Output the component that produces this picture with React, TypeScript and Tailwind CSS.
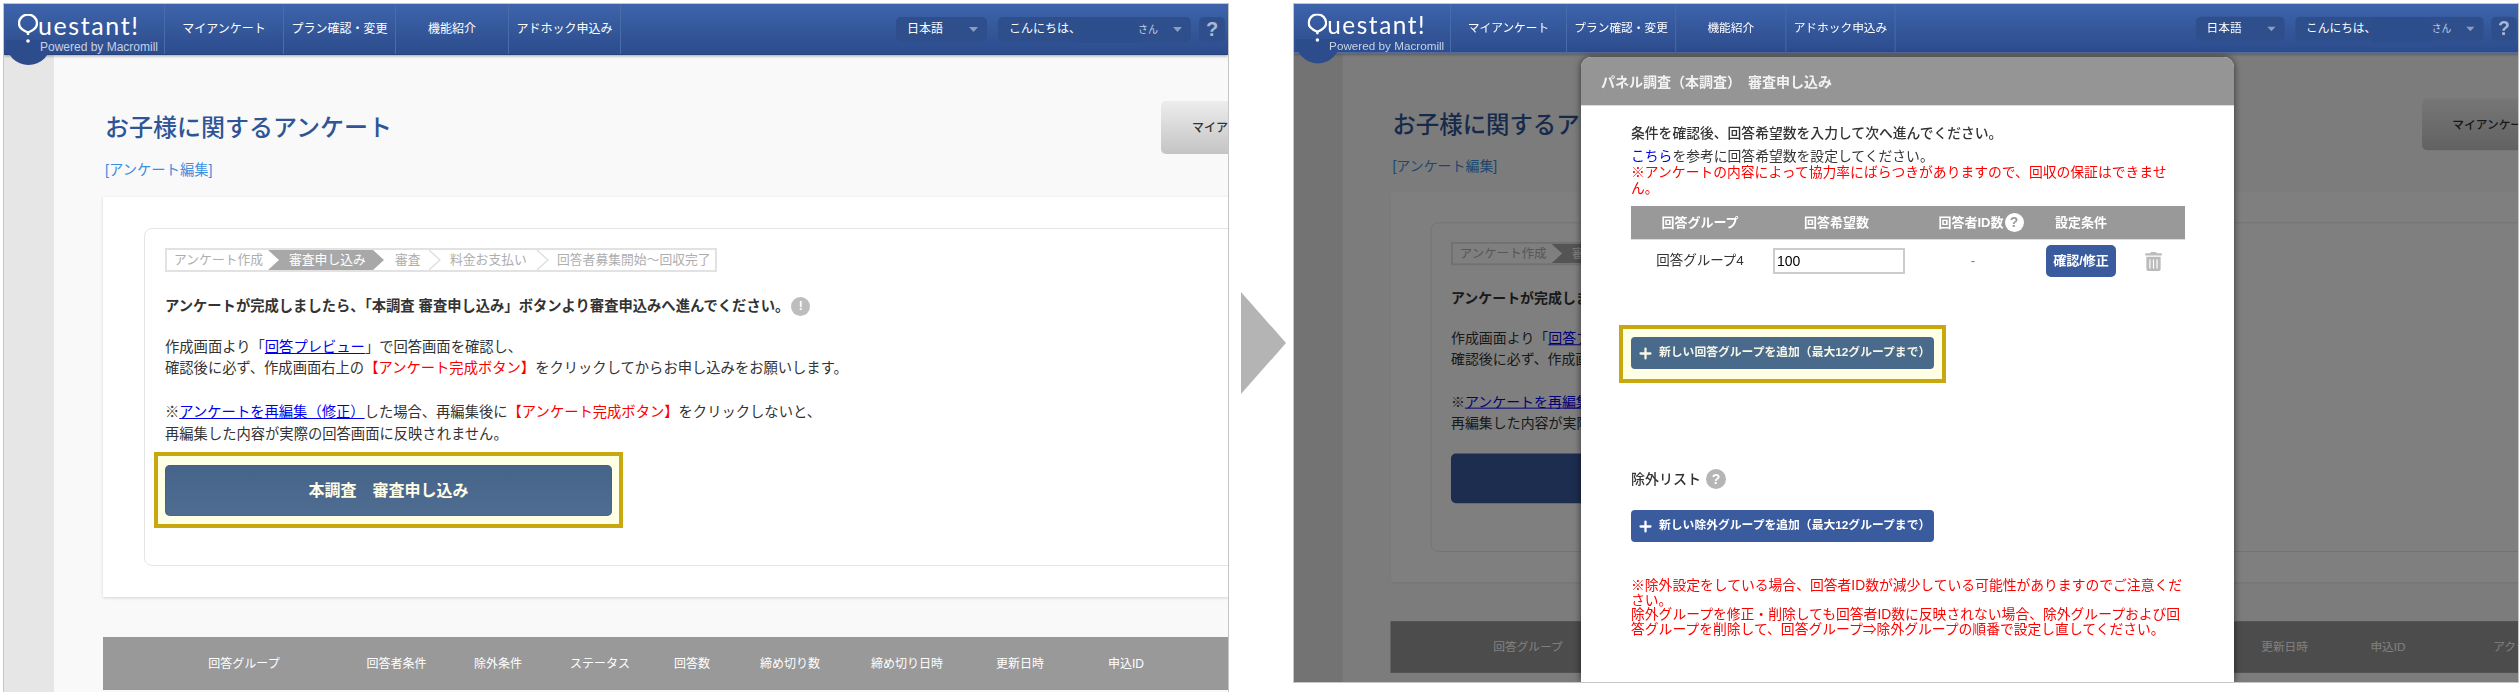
import React from 'react';
import { Plus } from 'lucide-react';
import { FaTrashAlt } from 'react-icons/fa';

const listColumns = ['回答グループ', '回答者条件', '除外条件', 'ステータス', '回答数', '締め切り数', '締め切り日時', '更新日時', '申込ID', 'アクション'];

const Caret: React.FC = () => (
  <svg width="9" height="5" viewBox="0 0 9 5" className="flex-none">
    <path d="M0 0h9L4.5 5z" fill="#8b9dc0" />
  </svg>
);

const StepChevron: React.FC = () => (
  <svg width="13" height="20" viewBox="0 0 13 20" className="flex-none">
    <path d="M1 0l11 10L1 20" fill="none" stroke="#dcdcdc" strokeWidth="1.2" />
  </svg>
);

const Header: React.FC = () => (
  <header className="relative z-10 flex h-[51px] items-stretch border-b border-[#264379] bg-linear-to-b from-[#3e64ab] to-[#2c4c8c] text-white shadow-[0_1px_3px_rgba(0,0,0,0.35)]">
    <div className="relative w-[160px] flex-none pl-[14px] pt-[7px]">
      <div className="absolute left-[2px] top-[36px] h-[25px] w-[45px] rounded-b-[24px] bg-[#2c4c8c]" />
      <div className="relative flex items-start">
        <svg width="20" height="31" viewBox="0 0 20 31" className="mt-[3px] flex-none">
          <path d="M10 18.5C5 16.5 1 14 1 9.500a9 9 0 0 1 18 0c0 4.500-4 7-9 9" fill="none" stroke="white" strokeWidth="2.400" />
          <path d="M10 18v3" stroke="white" strokeWidth="2.400" />
          <circle cx="10" cy="27" r="1.800" fill="white" />
        </svg>
        <span className="font-['Lato',sans-serif] text-[25px] leading-[28px] tracking-[1.6px]">uestant!</span>
      </div>
      <div className="relative -mt-[5px] ml-[22px] whitespace-nowrap font-['Liberation_Sans',sans-serif] text-[12px] leading-[14px] text-[#c6d1e6]">Powered by Macromill</div>
    </div>
    <nav className="flex border-l border-[#4a6cab] text-[12px]">
      <a className="flex w-[119px] items-center justify-center border-r border-[#4a6cab]">マイアンケート</a>
      <a className="flex w-[112px] items-center justify-center border-r border-[#4a6cab]">プラン確認・変更</a>
      <a className="flex w-[113px] items-center justify-center border-r border-[#4a6cab]">機能紹介</a>
      <a className="flex w-[112px] items-center justify-center border-r border-[#4a6cab]">アドホック申込み</a>
    </nav>
    <div className="ml-auto flex items-center gap-[8px] pr-[3px] text-[12px]">
      <div className="mr-[3px] flex h-[25px] w-[91px] items-center justify-between rounded-[5px] bg-[#2f4f8c] pl-[11px] pr-[9px]">
        <span>日本語</span>
        <Caret />
      </div>
      <div className="flex h-[25px] w-[193px] items-center rounded-[5px] bg-[#2f4f8c] pl-[11px] pr-[9px]">
        <span>こんにちは、</span>
        <span className="-ml-[3px] mt-[3px] h-[24px] w-[59px] flex-none bg-[#2c4e8c]" />
        <span className="ml-[1px] text-[10px] text-[#c6d1e6]">さん</span>
        <span className="ml-auto"><Caret /></span>
      </div>
      <div className="flex h-[25px] w-[26px] items-center justify-center rounded-[5px] bg-[#2f4f8c] font-['Liberation_Sans',sans-serif] text-[20px] font-bold text-[#aab8d3]">?</div>
    </div>
  </header>
);

const Steps: React.FC = () => (
  <div className="flex h-[24px] w-[552px] items-center whitespace-nowrap border-2 border-[#e2e2e2] text-[12.8px] text-[#aeaeae]">
    <span className="w-[101px] flex-none pl-[7px]">アンケート作成</span>
    <span className="flex h-full w-[116px] flex-none items-center bg-[#a8a8a8] pl-[21px] text-white [clip-path:polygon(0_0,calc(100%-11px)_0,100%_50%,calc(100%-11px)_100%,0_100%,11px_50%)]">審査申し込み</span>
    <span className="w-[44px] flex-none pl-[11px]">審査</span>
    <StepChevron />
    <span className="w-[95px] flex-none pl-[9px]">料金お支払い</span>
    <StepChevron />
    <span className="pl-[8px]">回答者募集開始〜回収完了</span>
  </div>
);

const SurveyPage: React.FC<{ dimmed?: boolean }> = ({ dimmed }) => (
  <>
    <Header />
    <div className="relative flex">
      <div className="w-[50px] flex-none bg-[#e6e6e6]" />
      <main className="flex-1 bg-[#f9f9f9] pb-[40px] pl-[49px] text-[14.3px] text-[#333]">
        <div className="w-[1238px]">
          <div className="flex items-center justify-between pt-[46px]">
            <h1 className="pl-[2px] text-[24px] font-medium leading-[32px] text-[#2f5597]">お子様に関するアンケート</h1>
            <button className="flex h-[53px] w-[180px] items-center rounded-[5px] bg-linear-to-b from-[#ededed] to-[#c4c4c4] pl-[31px] text-[12px] font-medium text-[#333]">マイアンケート</button>
          </div>
          <a className="mt-[6px] block pl-[2px] leading-[20px] text-[#3d8fe0]">[アンケート編集]</a>
          <section className="mt-[17px] h-[400px] bg-white pl-[41px] pt-[31px] shadow-[0_1px_3px_rgba(0,0,0,0.15)]">
            <div className="h-[338px] rounded-[8px] border border-[#e5e5e5] pl-[20px] pt-[19px]">
              <Steps />
              <p className="mt-[23px] flex items-center font-bold leading-[22px]">
                アンケートが完成しましたら、「本調査 審査申し込み」ボタンより審査申込みへ進んでください。
                <span className="ml-[2px] flex h-[19px] w-[19px] items-center justify-center rounded-full bg-[#bdbdbd] text-[12px] text-white">!</span>
              </p>
              <p className="mt-[20px] leading-[21px]">
                作成画面より「<a className="text-[#0000ee] underline">回答プレビュー</a>」で回答画面を確認し、<br />
                確認後に必ず、作成画面右上の<span className="text-[#ff0000]">【アンケート完成ボタン】</span>をクリックしてからお申し込みをお願いします。
              </p>
              <p className="mt-[22px] leading-[22px]">
                ※<a className="text-[#0000ee] underline">アンケートを再編集（修正）</a>した場合、再編集後に<span className="text-[#ff0000]">【アンケート完成ボタン】</span>をクリックしないと、<br />
                再編集した内容が実際の回答画面に反映されません。
              </p>
              {dimmed ? (
                <div className="mt-[7px] w-[469px] -translate-x-[11px] border-4 border-transparent px-[7px] pb-[8px] pt-[9px]">
                  <button className="h-[51px] w-full rounded-[5px] bg-[#3a5b9e] text-[16px] font-bold text-white">本調査　審査申し込み</button>
                </div>
              ) : (
                <div className="mt-[7px] w-[469px] -translate-x-[11px] border-4 border-[#c9a80f] bg-[#ffffe6] px-[7px] pb-[8px] pt-[9px]">
                  <button className="h-[51px] w-full rounded-[5px] bg-linear-to-b from-[#46648a] to-[#4e6d91] text-[16px] font-bold text-[#fffde8] shadow-[inset_0_0_1px_rgba(0,0,0,0.5)]">本調査　審査申し込み</button>
                </div>
              )}
            </div>
          </section>
          <div className="mt-[40px] grid h-[53px] grid-cols-[210px_95px_108px_96px_88px_108px_126px_100px_112px_120px] items-center bg-[#999999] pl-[36px] text-center text-[12px] text-white">
            {listColumns.map((col) => (
              <span key={col} className={col === 'アクション' ? 'whitespace-nowrap pl-[52px] text-left' : 'whitespace-nowrap'}>{col}</span>
            ))}
          </div>
        </div>
      </main>
      {dimmed && <div className="absolute inset-0 bg-black/50" />}
    </div>
  </>
);

const ApplyDialog: React.FC = () => (
  <div className="absolute bottom-0 left-[287px] top-[53px] w-[653px] rounded-t-[10px] bg-white text-[#333] shadow-[0_0_7px_rgba(0,0,0,0.6)]">
    <div className="flex h-[49px] items-center rounded-t-[10px] border-b border-[#dcdcdc] bg-[#959595] pl-[20px] pt-[3px] text-[14px] font-bold text-[#f2f2f2]">
      パネル調査（本調査）　審査申し込み
    </div>
    <div className="w-[604px] pl-[50px] pt-[18px] text-[13.8px]">
      <p className="font-medium leading-[20px]">条件を確認後、回答希望数を入力して次へ進んでください。</p>
      <p className="mt-[5px] leading-[16px]">
        <a className="text-[#0000ee]">こちら</a>を参考に回答希望数を設定してください。<br />
        <span className="text-[#ff0000]">※アンケートの内容によって協力率にばらつきがありますので、回収の保証はできません。</span>
      </p>

      <div className="mt-[9px] grid h-[34px] grid-cols-[138px_147px_130px_70px_69px] items-center border-b border-[#dcdcdc] bg-[#999999] text-center text-[13px] font-bold text-white">
        <span>回答グループ</span>
        <span className="pr-[12px]">回答希望数</span>
        <span className="flex items-center justify-center">
          回答者ID数
          <span className="ml-[1px] flex h-[19px] w-[19px] items-center justify-center rounded-full bg-white text-[14px] font-bold text-[#999999]">?</span>
        </span>
        <span>設定条件</span>
      </div>
      <div className="grid h-[38px] grid-cols-[138px_147px_130px_70px_69px] items-center pt-[4px] text-center text-[13.5px]">
        <span>回答グループ4</span>
        <input readOnly value="100" className="ml-[4px] h-[26px] w-[132px] border-2 border-[#cccccc] pl-[2px] font-['Liberation_Sans',sans-serif] text-[14px] text-black" />
        <span className="pr-[16px] text-[#777]">-</span>
        <button className="h-[32px] w-[70px] rounded-[5px] bg-[#3a5b9e] text-[13px] font-bold text-white">確認/修正</button>
        <span className="flex justify-center pl-[5px] text-[#bbbbbb]"><FaTrashAlt size={19} /></span>
      </div>

      <div className="-ml-[12px] mt-[47px] w-[327px] border-4 border-[#c9a80f] bg-[#ffffe6] px-[8px] pb-[10px] pt-[8px]">
        <button className="flex h-[32px] w-full items-center gap-[5px] rounded-[4px] bg-[#4a6a8c] pl-[6px] text-[11.8px] font-bold text-[#f6f6e6]">
          <Plus size={17} strokeWidth={3.2} />
          新しい回答グループを追加（最大12グループまで）
        </button>
      </div>

      <div className="mt-[86px] flex h-[20px] items-center text-[14px] font-medium">
        除外リスト
        <span className="ml-[5px] flex h-[20px] w-[20px] items-center justify-center rounded-full bg-[#b5b5b5] text-[14px] font-bold text-white">?</span>
      </div>
      <button className="mt-[21px] flex h-[32px] w-[303px] items-center gap-[5px] rounded-[4px] bg-[#3a5b9e] pl-[6px] text-[11.8px] font-bold text-white">
        <Plus size={17} strokeWidth={3.2} />
        新しい除外グループを追加（最大12グループまで）
      </button>

      <p className="mt-[37px] leading-[14.5px] text-[#ff0000]">
        ※除外設定をしている場合、回答者ID数が減少している可能性がありますのでご注意ください。<br />
        除外グループを修正・削除しても回答者ID数に反映されない場合、除外グループおよび回答グループを削除して、回答グループ⇒除外グループの順番で設定し直してください。
      </p>
    </div>
  </div>
);

const App: React.FC = () => (
  <div className="flex h-[692px] w-[2520px] items-start overflow-hidden bg-white pl-[3px] pt-[3px] font-['Liberation_Sans','Noto_Sans_CJK_JP',sans-serif]">
    <div className="h-[689px] w-[1226px] flex-none overflow-hidden border-x border-t border-[#c6c6c6]">
      <SurveyPage />
    </div>
    <svg width="45" height="102" viewBox="0 0 45 102" className="ml-[12px] mr-[7px] mt-[289px] flex-none">
      <polygon points="0,0 45,51 0,102" fill="#b4b4b4" />
    </svg>
    <div className="relative h-[680px] w-[1226px] flex-none overflow-hidden border border-[#c6c6c6]">
      <div className="w-[1257px] origin-top-left scale-[0.975]">
        <SurveyPage dimmed />
      </div>
      <ApplyDialog />
    </div>
  </div>
);

export default App;
